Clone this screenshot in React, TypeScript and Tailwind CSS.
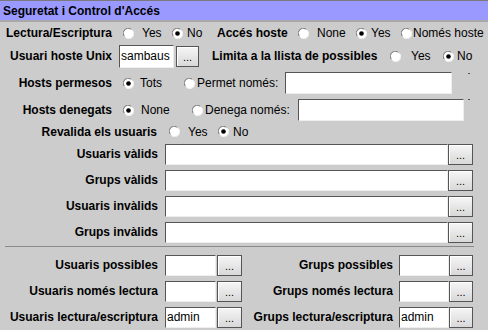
import React from "react";

const Radio = ({ checked, label, gap, className }: { checked?: boolean; label: string; gap: string; className: string }) => (
  <div className={`flex items-center shrink-0 ${className}`}>
    <svg width="11" height="11" viewBox="0 0 11 11" className="shrink-0">
      <circle cx="5.5" cy="5.5" r="5" fill="#ffffff" />
      <path d="M1.2 8.2 A5 5 0 0 1 8.2 1.2" stroke="#777" strokeWidth="1" fill="none" />
      <path d="M9.8 2.8 A5 5 0 0 1 2.8 9.8" stroke="#f4f4f4" strokeWidth="1" fill="none" />
      {checked && <circle cx="5.5" cy="5.5" r="2.3" fill="#000" />}
    </svg>
    <span className={`${gap} whitespace-nowrap`}>{label}</span>
  </div>
);

const Input = ({ value, className }: { value?: string; className: string }) => (
  <div className={`bg-white border-t border-l border-t-[#555] border-l-[#555] border-r border-b border-r-[#eeeeee] border-b-[#eeeeee] flex items-center pl-[1px] shrink-0 ${className}`}>
    {value}
  </div>
);

const Btn = ({ className }: { className: string }) => (
  <div className={`h-[21px] shrink-0 border border-[#555] bg-gradient-to-b from-[#f6f6f6] to-[#d8d8d8] shadow-[inset_1px_1px_0_#ffffff] flex items-center justify-center text-[11px] leading-none pt-[2px] ${className}`}>
    ...
  </div>
);

const Label = ({ children, className, left }: { children: React.ReactNode; className: string; left?: boolean }) => (
  <div className={`font-bold whitespace-nowrap shrink-0 ${left ? "text-left" : "text-right"} ${className}`}>{children}</div>
);

const Tick = ({ className }: { className: string }) => (
  <div className={`self-start w-[2px] h-px bg-[#555] shrink-0 ${className}`} />
);

export default function App() {
  return (
    <div className="w-[488px] h-[330px] overflow-hidden bg-[#cccccc] text-black text-[12px] leading-[14px]" style={{ fontFamily: '"Liberation Sans", Arial, sans-serif' }}>
      <div className="h-[22px] border-t border-t-[#7a7a7a] border-b-2 border-b-[#a8a8a8] bg-[#9999ff] flex items-center pl-[3px] font-bold">
        Seguretat i Control d'Accés
      </div>

      <div className="h-[22px] flex items-center">
        <Label className="w-[112px]">Lectura/Escriptura</Label>
        <Radio className="ml-[11px] w-[49px]" gap="ml-[8px]" label="Yes" />
        <Radio className="w-[45px]" gap="ml-[4px]" label="No" checked />
        <Label left className="w-[81px]">Accés hoste</Label>
        <Radio className="w-[58px]" gap="ml-[8px]" label="None" />
        <Radio className="w-[45px]" gap="ml-[4px]" label="Yes" checked />
        <Radio className="" gap="ml-[1px]" label="Només hoste" />
      </div>

      <div className="h-[24px] flex items-center">
        <Label className="w-[112px]">Usuari hoste Unix</Label>
        <Input className="ml-[7px] w-[55px] h-[23px]" value="sambaus" />
        <Btn className="ml-[2px] w-[23px]" />
        <Label left className="ml-[13px] w-[178px]">Limita a la llista de possibles</Label>
        <Radio className="w-[53px]" gap="ml-[10px]" label="Yes" />
        <Radio className="" gap="ml-[3px]" label="No" checked />
      </div>

      <div className="h-[30px] flex items-center">
        <Label className="w-[112px]">Hosts permesos</Label>
        <Radio className="ml-[11px] w-[61px]" gap="ml-[6px]" label="Tots" checked />
        <Radio className="w-[101px]" gap="ml-[2px]" label="Permet només:" />
        <Input className="w-[167px] h-[22px]" />
        <Tick className="ml-[16px] mt-[5px]" />
      </div>

      <div className="h-[24px] flex items-center">
        <Label className="w-[112px]">Hosts denegats</Label>
        <Radio className="ml-[11px] w-[69px]" gap="ml-[7px]" label="None" checked />
        <Radio className="w-[106px]" gap="ml-[2px]" label="Denega només:" />
        <Input className="w-[166px] h-[22px]" />
        <Tick className="ml-[4px] mt-[1px]" />
      </div>

      <div className="h-[19px] flex items-center">
        <Label className="w-[157px]">Revalida els usuaris</Label>
        <Radio className="ml-[12px] w-[49px]" gap="ml-[8px]" label="Yes" />
        <Radio className="" gap="ml-[4px]" label="No" checked />
      </div>

      {["Usuaris vàlids", "Grups vàlids", "Usuaris invàlids", "Grups invàlids"].map((l) => (
        <div key={l} className="h-[26px] flex items-center">
          <Label className="w-[158px]">{l}</Label>
          <Input className="ml-[7px] w-[283px] h-[21px]" />
          <Btn className="w-[25px]" />
        </div>
      ))}

      <div className="h-[7px] pt-px">
        <div className="ml-[5px] w-[469px] h-px bg-[#8a8a8a]" />
      </div>

      {[
        ["Usuaris possibles", "Grups possibles", ""],
        ["Usuaris només lectura", "Grups només lectura", ""],
        ["Usuaris lectura/escriptura", "Grups lectura/escriptura", "admin"],
      ].map(([a, b, v]) => (
        <div key={a} className="h-[26px] flex items-center">
          <Label className="w-[158px]">{a}</Label>
          <Input className="ml-[7px] w-[51px] h-[21px]" value={v} />
          <Btn className="ml-[1px] w-[25px]" />
          <Label className="w-[151px]">{b}</Label>
          <Input className="ml-[6px] w-[50px] h-[21px]" value={v} />
          <Btn className="w-[24px]" />
        </div>
      ))}
    </div>
  );
}
